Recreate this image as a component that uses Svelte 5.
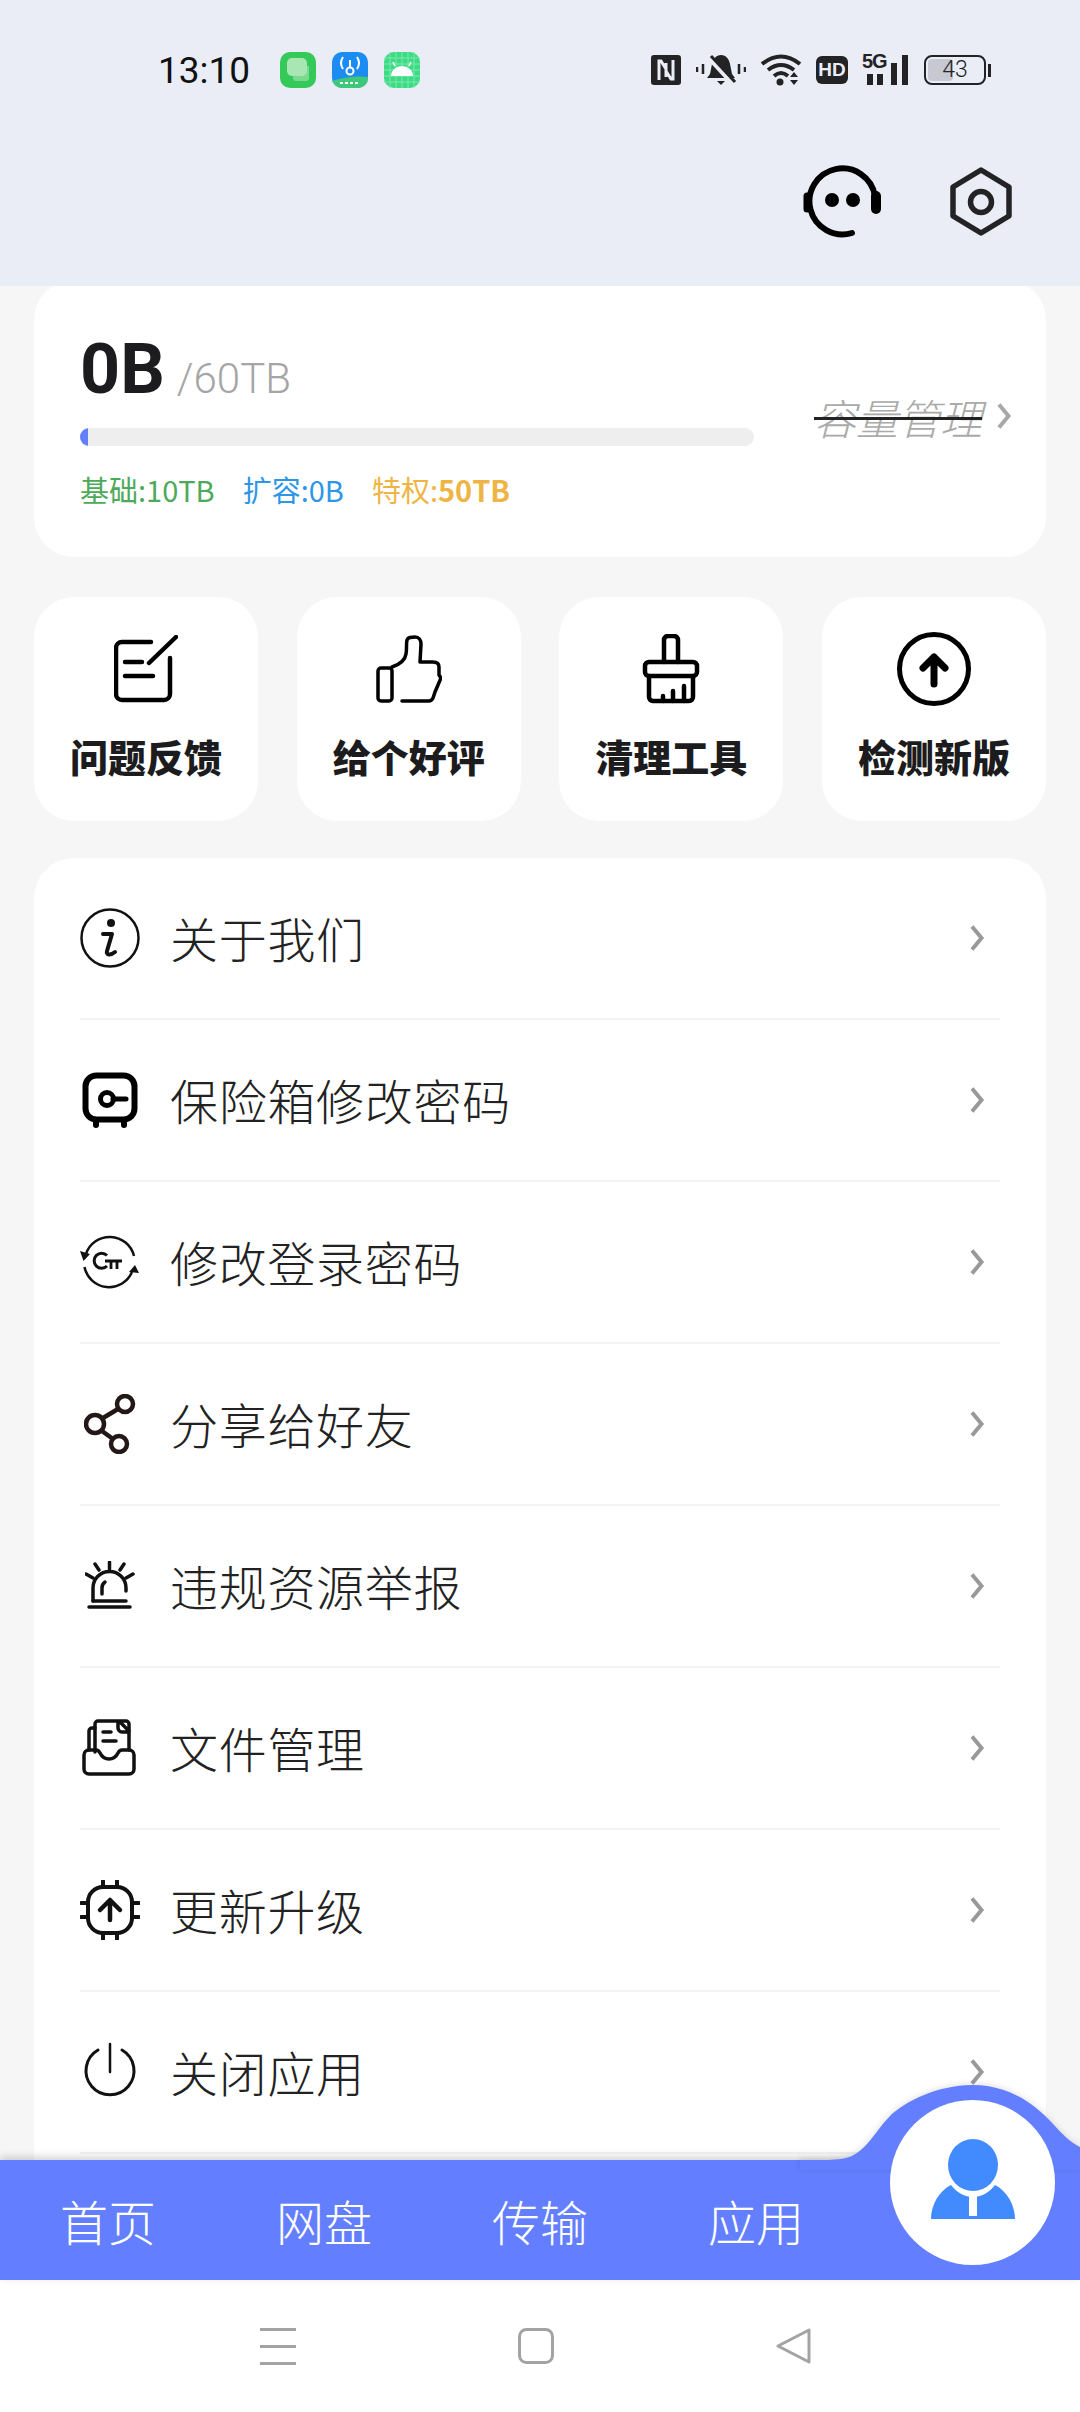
<script>
    const tiles = [
        { key: "edit", label: "问题反馈" },
        { key: "thumb", label: "给个好评" },
        { key: "brush", label: "清理工具" },
        { key: "up", label: "检测新版" },
    ];
    const rows = [
        { key: "info", label: "关于我们" },
        { key: "safe", label: "保险箱修改密码" },
        { key: "key", label: "修改登录密码" },
        { key: "share", label: "分享给好友" },
        { key: "alarm", label: "违规资源举报" },
        { key: "file", label: "文件管理" },
        { key: "chip", label: "更新升级" },
        { key: "power", label: "关闭应用" },
    ];
    const tabs = ["首页", "网盘", "传输", "应用"];
</script>

<div class="page">
    <header class="top">
        <div class="status">
            <span class="time">13:10</span>
            <div class="apps">
                <svg width="36" height="36" viewBox="0 0 36 36">
                    <rect width="36" height="36" rx="10" fill="#35c95a" />
                    <path d="M13 14h16v12a3 3 0 0 1-3 3H16a3 3 0 0 1-3-3z" fill="#78db90" />
                    <rect x="7" y="6" width="20" height="18" rx="5" fill="#a8e6b4" />
                </svg>
                <svg width="36" height="36" viewBox="0 0 36 36">
                    <rect width="36" height="36" rx="10" fill="#1c8cf2" />
                    <path d="M0 29q18-6 36-4v1a10 10 0 0 1-10 10H10A10 10 0 0 1 0 26z" fill="#3ec878" />
                    <circle cx="18" cy="19" r="3.5" fill="none" stroke="#fff" stroke-width="2" />
                    <path d="M18 15V8M11 5q-4 6 0 12M25 5q4 6 0 12" fill="none" stroke="#fff" stroke-width="2" />
                    <path d="M8 31h18" stroke="#fff" stroke-width="2" stroke-dasharray="3 2" />
                </svg>
                <svg width="36" height="36" viewBox="0 0 36 36">
                    <rect width="36" height="36" rx="10" fill="#3ddc84" />
                    <path d="M6 0v36M12 0v36M18 0v36M24 0v36M30 0v36M0 6h36M0 12h36M0 18h36M0 24h36M0 30h36" stroke="#7fe8ae" stroke-width="1" />
                    <path d="M7 24a11 10 0 0 1 22 0z" fill="#fff" />
                    <path d="M11 14l-2-4M25 14l2-4" stroke="#fff" stroke-width="1.5" />
                </svg>
            </div>
            <div class="sys">
                <svg width="30" height="30" viewBox="0 0 30 30">
                    <rect width="30" height="30" rx="3" fill="#232326" />
                    <path d="M8 25V6h2l5 8M22 5v19h-2l-5-8M15 8v14" fill="none" stroke="#eaedf6" stroke-width="3" />
                </svg>
                <svg width="50" height="32" viewBox="0 0 50 32" class="bell">
                    <path d="M25 1c5 0 8 4 9 9l2 10 3 4H11l3-4 2-10c1-5 4-9 9-9zM21 27h8l-4 4z" fill="#232326" />
                    <path d="M13 3l24 26" stroke="#eaedf6" stroke-width="6" />
                    <path d="M15 2l24 26" stroke="#232326" stroke-width="3" />
                    <path d="M1 13v5M7 10v10M43 10v10M49 13v5" stroke="#232326" stroke-width="2.5" />
                </svg>
                <svg width="42" height="32" viewBox="0 0 42 32">
                    <path d="M2 10q19-15 38 0M8 16q13-10 26 0M14 22q7-6 14 0" fill="none" stroke="#232326" stroke-width="4" />
                    <circle cx="20" cy="28" r="3.5" fill="#232326" />
                    <path d="M30 23l4-5 4 5zM30 26l4 5 4-5z" fill="#232326" />
                </svg>
                <span class="hd">HD</span>
                <div class="signal">
                    <span class="five">5G</span>
                    <svg width="46" height="30" viewBox="0 0 46 30">
                        <path d="M5 19h6v11H5zM15 19h6v11h-6zM29 8h6v22h-6zM40 0h6v30h-6z" fill="#232326" />
                    </svg>
                </div>
                <div class="battery">
                    <div class="cell"><i></i><span>43</span></div>
                    <b></b>
                </div>
            </div>
        </div>
        <div class="actions">
            <svg width="84" height="74" viewBox="0 0 84 74" fill="none" stroke="#000" stroke-width="6" stroke-linecap="round">
                <path d="M52 68A33 33 0 1 1 75 31" />
                <path d="M76 31v13" stroke-width="10" />
                <path d="M7 31v13" stroke-width="7" />
                <circle cx="32" cy="35" r="7" fill="#000" stroke="none" />
                <circle cx="53" cy="35" r="7" fill="#000" stroke="none" />
            </svg>
            <svg width="68" height="74" viewBox="0 0 68 74" fill="none" stroke="#232326" stroke-width="5.500" stroke-linejoin="round">
                <path d="M34 5l28 17v29L34 68 6 51V22z" />
                <circle cx="34" cy="37" r="10.500" />
            </svg>
        </div>
    </header>

    <main class="content">
        <section class="card quota">
            <div class="quota-left">
                <div class="used"><strong>0B</strong><span>/60TB</span></div>
                <div class="bar"><div class="fill" style="width: 8px"></div></div>
                <div class="stats">
                    <span class="green">基础:10TB</span>
                    <span class="blue">扩容:0B</span>
                    <span class="amber">特权:<b>50TB</b></span>
                </div>
            </div>
            <div class="manage">
                <span>容量管理</span>
                <svg width="15" height="26" viewBox="0 0 15 26" fill="none" stroke="#a8a8a8" stroke-width="4"><path d="M2 1.500l9.500 11.500-9.500 11.500" /></svg>
            </div>
        </section>

        <section class="tiles">
            {#each tiles as tile}
                <div class="tile">
                    <div class="tile-icon">
                        {#if tile.key === "edit"}
                            <svg width="64" height="68" viewBox="0 0 64 68" fill="none" stroke="#000" stroke-width="4.500" stroke-linecap="round" stroke-linejoin="round">
                                <path d="M37 7H8a6 6 0 0 0-6 6v46a6 6 0 0 0 6 6h42a6 6 0 0 0 6-6V23" />
                                <path d="M35 28L62 2" />
                                <path d="M11 27h17M11 41h28" />
                            </svg>
                        {:else if tile.key === "thumb"}
                            <svg width="66" height="68" viewBox="0 0 66 68" fill="none" stroke="#000" stroke-width="3.500" stroke-linecap="round" stroke-linejoin="round">
                                <rect x="2" y="33" width="14" height="33" rx="3" />
                                <path d="M16 32c6-2 13-6 14-13 1-5 0-10 1-14 1-3 4-3 8-3 4 0 6 3 6 7l-1 18h13c4 0 6 2 6 5v8l2 3-3 7-3 7-2 6c-1 2-2 3-4 3H26" />
                            </svg>
                        {:else if tile.key === "brush"}
                            <svg width="60" height="70" viewBox="0 0 60 70" fill="none" stroke="#000" stroke-width="4.500" stroke-linecap="round" stroke-linejoin="round">
                                <path d="M23 28V6a4 4 0 0 1 4-4h6a4 4 0 0 1 4 4v22" />
                                <rect x="4" y="28" width="52" height="14" rx="4" />
                                <path d="M8 42v21a4 4 0 0 0 4 4h36a4 4 0 0 0 4-4V42" />
                                <path d="M22 67v-5M32 67V57M43 67V52" />
                            </svg>
                        {:else}
                            <svg width="76" height="76" viewBox="0 0 76 76" fill="none" stroke="#000" stroke-width="5" stroke-linecap="round" stroke-linejoin="round">
                                <circle cx="38" cy="38" r="34.500" />
                                <path d="M38 53V26M27 37l11-11 11 11" stroke-width="7" />
                            </svg>
                        {/if}
                    </div>
                    <span>{tile.label}</span>
                </div>
            {/each}
        </section>

        <section class="card list">
            {#each rows as row}
                <div class="row">
                    <div class="row-icon">
                        {#if row.key === "info"}
                            <svg width="60" height="60" viewBox="0 0 60 60" fill="none" stroke="#111">
                                <circle cx="30" cy="30" r="28.500" stroke-width="2.500" />
                                <circle cx="31" cy="15" r="4" fill="#111" stroke="none" />
                                <path d="M23 26h9l-5 17c-1 4 3 5 8 1" stroke-width="4" stroke-linecap="round" stroke-linejoin="round" />
                            </svg>
                        {:else if row.key === "safe"}
                            <svg width="56" height="56" viewBox="0 0 56 56" fill="none" stroke="#000">
                                <rect x="3.500" y="3.500" width="49" height="44" rx="11" stroke-width="6" />
                                <circle cx="25" cy="27" r="6.500" stroke-width="5" />
                                <path d="M31 27h13" stroke-width="5" stroke-linecap="round" />
                                <path d="M14 50v3M42 50v3" stroke-width="6" stroke-linecap="round" />
                            </svg>
                        {:else if row.key === "key"}
                            <svg class="open" width="56" height="54" viewBox="0 0 56 54" fill="none" stroke="#111" stroke-width="2.500">
                                <path d="M4 19A25 25 0 0 1 52 21" />
                                <path d="M2.500 32A25 25 0 0 0 50 37" />
                                <path d="M-2 16l10 3-6.500 7zM57 38l-10-1 6-7z" fill="#111" stroke="none" />
                                <path d="M25 20.500A7.500 7.500 0 1 0 25 31" stroke-width="3" />
                                <path d="M23 26h17M29 26v8M35 26v8" stroke-width="2.800" />
                            </svg>
                        {:else if row.key === "share"}
                            <svg width="52" height="60" viewBox="0 0 52 60" fill="none" stroke="#231815" stroke-width="4.500">
                                <circle cx="41" cy="10" r="8" />
                                <circle cx="11" cy="30" r="9" />
                                <circle cx="35" cy="50" r="8" />
                                <path d="M19 24l15-9M18 37l11 8" />
                            </svg>
                        {:else if row.key === "alarm"}
                            <svg width="50" height="50" viewBox="0 0 50 50" fill="none" stroke="#111" stroke-width="3.500" stroke-linecap="round" stroke-linejoin="round">
                                <path d="M8 40V27a16.500 16.500 0 0 1 33 0v3" />
                                <path d="M8 40h33" />
                                <path d="M17 33v-6q0-4 3-6" />
                                <path d="M4 46h41M24.500 1v7M10 3l4 6M39 3l-4 6M1 13l7 4M48 13l-7 4" />
                            </svg>
                        {:else if row.key === "file"}
                            <svg width="58" height="58" viewBox="0 0 58 58" fill="none" stroke="#111" stroke-width="3.500" stroke-linecap="round" stroke-linejoin="round">
                                <path d="M14 9h-3a3 3 0 0 0-3 3v19" />
                                <path d="M14 33V5a3 3 0 0 1 3-3h28a3 3 0 0 1 3 3v26" />
                                <path d="M37 3v6a4 4 0 0 0 4 4h6M39 3l9 9" />
                                <path d="M22 13h8M22 22h13" />
                                <path d="M3 36a5 5 0 0 1 5-5h7c2 0 3 1 4 3 2 4 5 6 9 6s7-2 9-6c1-2 2-3 4-3h7a5 5 0 0 1 5 5v14a5 5 0 0 1-5 5H8a5 5 0 0 1-5-5z" />
                            </svg>
                        {:else if row.key === "chip"}
                            <svg width="60" height="60" viewBox="0 0 60 60" fill="none" stroke="#111" stroke-width="4" stroke-linecap="round" stroke-linejoin="round">
                                <rect x="8" y="7" width="44" height="46" rx="15" />
                                <path d="M30 40V21M20 30l10-10 10 10" stroke-width="4.500" />
                                <path d="M1 23h6M1 37h6M53 23h6M53 37h6M23 1v5M37 1v5M23 54v5M37 54v5" />
                            </svg>
                        {:else}
                            <svg class="open" width="52" height="54" viewBox="0 0 52 54" fill="none" stroke="#111" stroke-linecap="round">
                                <path d="M14 5a24 24 0 1 0 24 0" stroke-width="3" />
                                <path d="M26 -1v28" stroke-width="2.500" />
                            </svg>
                        {/if}
                    </div>
                    <span class="row-label">{row.label}</span>
                    <svg class="chev" width="15" height="26" viewBox="0 0 15 26" fill="none" stroke="#999" stroke-width="4"><path d="M2 1.500l9.500 11.500-9.500 11.500" /></svg>
                </div>
            {/each}
        </section>
    </main>

    <nav class="tabbar">
        <svg class="bump" width="280" height="90" viewBox="0 0 280 90">
            <path d="M0 80H20C44 80 52 78 62 69 72 60 80 46 90 36 104 22 138 5 172 5 215 5 240 30 254 45 262 54 270 62 280 67V90H0z" fill="#637fff" />
        </svg>
        {#each tabs as tab}
            <span class="tab">{tab}</span>
        {/each}
        <div class="me">
            <svg width="84" height="80" viewBox="0 0 84 80">
                <ellipse cx="42" cy="26" rx="25" ry="26" fill="#428bff" />
                <path d="M0 80C0 66 8 52 20 46 26 54 34 58 42 58 50 58 58 54 64 46 76 52 84 66 84 80z" fill="#428bff" />
                <rect x="38" y="57" width="8" height="20" fill="#fff" />
            </svg>
        </div>
    </nav>

    <footer class="sysnav">
        <svg width="36" height="38" viewBox="0 0 36 38" fill="#a3a3a3"><path d="M0 0h36v3H0zM0 17h36v3H0zM0 34h36v3H0z" /></svg>
        <svg width="36" height="36" viewBox="0 0 36 36" fill="none" stroke="#a3a3a3" stroke-width="3"><rect x="1.500" y="1.500" width="33" height="33" rx="7" /></svg>
        <svg width="36" height="36" viewBox="0 0 36 36" fill="none" stroke="#a3a3a3" stroke-width="3" stroke-linejoin="round"><path d="M33 2v32L2 18z" /></svg>
    </footer>
</div>

<style>
    :global(body) {
        background: #f6f6f6;
    }
    .page {
        width: 1080px;
        height: 2412px;
        display: flex;
        flex-direction: column;
        overflow: hidden;
        font-family: "Noto Sans CJK SC", "Noto Sans", sans-serif;
        color: #222;
    }
    .top {
        height: 286px;
        flex: none;
        background: #eaedf6;
        position: relative;
        z-index: 1;
    }
    .status {
        display: flex;
        align-items: center;
        height: 36px;
        padding: 52px 0 0 158px;
    }
    .time {
        width: 122px;
        font: 400 37px Roboto, sans-serif;
        color: #111;
    }
    .apps {
        display: flex;
        gap: 16px;
    }
    .sys {
        display: flex;
        align-items: center;
        gap: 14px;
        margin-left: 231px;
        color: #232326;
    }
    .bell {
        margin-left: 1px;
    }
    .hd {
        width: 32px;
        height: 28px;
        border-radius: 6px;
        background: #232326;
        color: #eaedf6;
        font: 700 19px/28px "Liberation Sans", sans-serif;
        text-align: center;
    }
    .signal {
        position: relative;
        width: 46px;
        height: 30px;
    }
    .five {
        position: absolute;
        left: 0;
        top: -3px;
        font: 700 20px/18px "Liberation Sans", sans-serif;
        letter-spacing: -1px;
    }
    .battery {
        display: flex;
        align-items: center;
        gap: 2px;
        margin-left: 2px;
    }
    .cell {
        position: relative;
        width: 62px;
        height: 30px;
        box-sizing: border-box;
        border: 2.500px solid #232326;
        border-radius: 8px;
        text-align: center;
        font: 300 23px/25px Roboto, sans-serif;
    }
    .cell i {
        position: absolute;
        left: 2px;
        top: 2px;
        bottom: 2px;
        width: 25px;
        border-radius: 4px;
        background: #c6c9d2;
    }
    .cell span {
        position: relative;
    }
    .battery b {
        width: 3px;
        height: 13px;
        background: #232326;
    }
    .actions {
        display: flex;
        justify-content: flex-end;
        align-items: center;
        gap: 63px;
        padding: 0 65px 0 0;
        margin-top: 77px;
    }
    .content {
        flex: 1;
        min-height: 0;
        overflow: hidden;
        padding: 0 34px;
        margin-top: -6px;
    }
    .card {
        background: #fff;
        border-radius: 40px;
    }
    .quota {
        height: 277px;
        box-sizing: border-box;
        padding: 50px 34px 0 46px;
        display: flex;
        justify-content: space-between;
    }
    .quota-left {
        width: 674px;
    }
    .used {
        display: flex;
        align-items: baseline;
        height: 78px;
    }
    .used strong {
        font: 700 70px/78px Roboto, sans-serif;
        color: #1c1c1e;
    }
    .used span {
        font: 300 42px Roboto, sans-serif;
        color: #a5a5a5;
        margin: 0 0 -3px 12px;
    }
    .bar {
        height: 18px;
        margin-top: 20px;
        border-radius: 9px;
        background: #eee;
        overflow: hidden;
    }
    .fill {
        height: 100%;
        background: #637fff;
    }
    .stats {
        display: flex;
        gap: 28px;
        margin-top: 23px;
        font-size: 29px;
        line-height: 40px;
    }
    .green { color: #4caa5a; }
    .blue { color: #2e96e6; }
    .amber { color: #eeb545; }
    .amber b {
        font-weight: 700;
    }
    .manage {
        display: flex;
        align-items: center;
        gap: 15px;
        height: 60px;
        margin-top: 56px;
    }
    .manage span {
        font-size: 42px;
        font-weight: 300;
        font-style: italic;
        color: #aaa;
        text-decoration: line-through;
        text-decoration-color: #222;
        text-decoration-thickness: 3px;
    }
    .tiles {
        display: grid;
        grid-template-columns: repeat(4, 224px);
        justify-content: space-between;
        margin-top: 40px;
    }
    .tile {
        height: 224px;
        border-radius: 40px;
        background: #fff;
        display: flex;
        flex-direction: column;
        align-items: center;
        font-size: 38px;
        font-weight: 900;
        line-height: 50px;
        color: #1c1c1e;
    }
    .tile-icon {
        height: 76px;
        margin-top: 34px;
        margin-bottom: 24px;
        display: flex;
        align-items: center;
    }
    .list {
        margin-top: 37px;
        padding: 0 46px;
        height: 1400px;
    }
    .row {
        height: 160px;
        display: flex;
        align-items: center;
        border-bottom: 2.500px solid #f3f3f3;
    }
    .row-icon {
        width: 92px;
        flex: none;
        display: flex;
        justify-content: center;
        padding-right: 32px;
        box-sizing: border-box;
    }
    .open {
        overflow: visible;
    }
    .row-label {
        flex: 1;
        margin-left: -2px;
        padding-bottom: 2px;
        font-size: 48px;
        font-weight: 300;
        letter-spacing: 0.7px;
    }
    .chev {
        margin-right: 15px;
    }
    .tabbar {
        flex: none;
        height: 120px;
        background: #637fff;
        display: grid;
        grid-template-columns: repeat(5, 216px);
        position: relative;
        box-shadow: 0 -3px 8px rgba(0, 0, 0, 0.18);
    }
    .bump {
        position: absolute;
        left: 800px;
        top: -80px;
        filter: drop-shadow(0 -1px 3px rgba(0, 0, 0, 0.12));
    }
    .tab {
        text-align: center;
        color: #fff;
        font-size: 48px;
        font-weight: 300;
        line-height: 120px;
    }
    .me {
        position: absolute;
        left: 890px;
        top: -60px;
        width: 165px;
        height: 165px;
        box-sizing: border-box;
        padding-bottom: 8px;
        border-radius: 50%;
        background: #fff;
        display: flex;
        align-items: center;
        justify-content: center;
    }
    .sysnav {
        flex: none;
        height: 132px;
        box-sizing: border-box;
        background: #fff;
        display: flex;
        align-items: flex-start;
        padding: 48px 0 0 260px;
        gap: 222px;
    }
</style>
